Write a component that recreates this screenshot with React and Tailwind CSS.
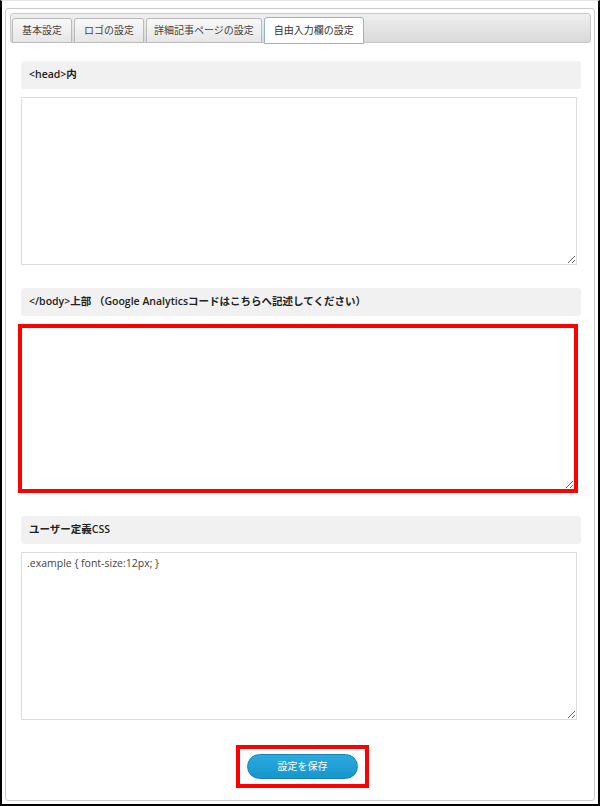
import React from 'react';

const tabs = ['基本設定', 'ロゴの設定', '詳細記事ページの設定', '自由入力欄の設定'];

const font = { fontFamily: '"Open Sans", "Noto Sans CJK JP", sans-serif' };

const SectionHead = ({ children, className = '' }) => (
    <div className={`w-[560px] h-[28px] bg-[#f1f1f1] rounded-[3px] flex items-center pl-[8px] text-[10.5px] font-semibold text-[#222] ${className}`}>
        {children}
    </div>
);

const Box = ({ value = '', className = '' }) => (
    <textarea
        defaultValue={value}
        className={`block w-[556px] h-[168px] border border-[#dddddd] bg-white px-[5px] py-[3px] text-[10.5px] text-[#444] outline-none ${className}`}
    />
);

const App = () => {
    return (
        <div className="w-[600px] h-[806px] bg-white border-x-2 border-b-2 border-black border-t border-t-[#e5e5e5] overflow-hidden" style={font}>
            <div className="mx-[3px] mt-[7px] h-[793px] border border-[#cccccc] rounded-[3px] pt-[4px] pl-[4px] pr-[3px]">
                {/* tab bar */}
                <div className="h-[30px] rounded-[3px] border border-[#c8c8c8] bg-gradient-to-b from-[#efefef] to-[#d9d9d9] flex items-end pl-[1px] gap-[2px]">
                    {tabs.map((t, i) => (
                        i === 3 ? (
                            <div key={t} className="h-[27px] -mb-[2px] px-[9px] flex items-center bg-white border border-[#8fb3d3] rounded-t-[3px] text-[10px] text-[#333]">
                                {t}
                            </div>
                        ) : (
                            <div key={t} className={`h-[25px] -mb-px flex items-center bg-gradient-to-b from-[#f8f8f8] to-[#e6e6e6] border border-[#bbbbbb] rounded-t-[3px] text-[10px] text-[#444] ${i === 2 ? 'px-[7px]' : 'px-[9px]'}`}>
                                {t}
                            </div>
                        )
                    ))}
                </div>

                <div className="pl-[11px]">
                    <SectionHead className="mt-[18px]">&lt;head&gt;内</SectionHead>
                    <Box className="mt-[8px]" />

                    <SectionHead className="mt-[23px]">&lt;/body&gt;上部 （Google Analyticsコードはこちらへ記述してください）</SectionHead>
                    <div className="mt-[8px] -ml-[3px] w-[560px] h-[169px] border-[4px] border-[#ff0000] bg-white">
                        <textarea className="block w-full h-full bg-white outline-none" />
                    </div>

                    <SectionHead className="mt-[23px]">ユーザー定義CSS</SectionHead>
                    <Box className="mt-[8px]" value=".example { font-size:12px; }" />

                    <div className="mt-[25px] ml-[215px] w-[133px] h-[43px] border-[4px] border-[#ff0000] flex items-center justify-center">
                        <button className="w-[111px] h-[25px] rounded-full bg-gradient-to-b from-[#2aaadf] to-[#1596cc] border border-[#1584b5] text-white text-[10px]">
                            設定を保存
                        </button>
                    </div>
                </div>
            </div>
        </div>
    );
};

export default App;
